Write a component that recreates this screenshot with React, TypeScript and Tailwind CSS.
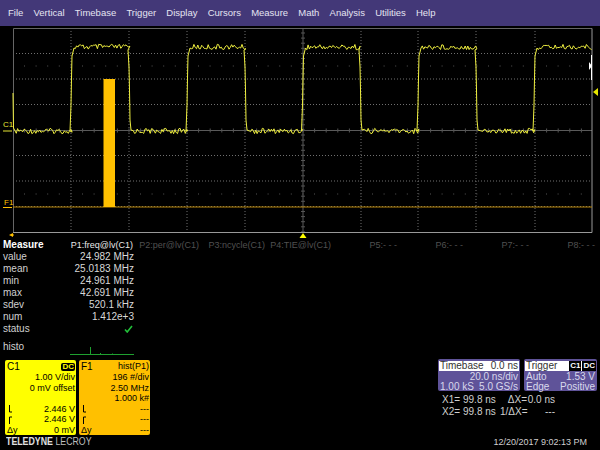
const menu = ['File', 'Vertical', 'Timebase', 'Trigger', 'Display', 'Cursors', 'Measure', 'Math', 'Analysis', 'Utilities', 'Help'];

const rows = [
  ['value', '24.982 MHz'],
  ['mean', '25.0183 MHz'],
  ['min', '24.961 MHz'],
  ['max', '42.691 MHz'],
  ['sdev', '520.1 kHz'],
  ['num', '1.412e+3'],
];

const params = ['P2:per@lv(C1)', 'P3:ncycle(C1)', 'P4:TIE@lv(C1)', 'P5:- - -', 'P6:- - -', 'P7:- - -', 'P8:- - -'];

// deterministic noise so the trace looks the same every render
function noise(i: number) {
  const v = Math.sin(i * 12.9898) * 43758.5453;
  return v - Math.floor(v);
}

function buildTrace() {
  const edges = [71, 129, 187, 245, 302.5, 360, 418, 476, 534];
  let d = 'M13 93 L13.5 128';
  let x = 15;
  let level = 131;
  let e = 0;
  let i = 0;
  while (x < 591) {
    if (e < edges.length && x >= edges[e]) {
      const rising = e % 2 === 0;
      const ex = edges[e];
      if (rising) {
        d += ` L${ex - 1} 131 L${ex} 105 L${ex + 0.5} 78 L${ex + 1} 56 L${ex + 3} 48`;
        level = 47;
        x = ex + 3;
      } else {
        d += ` L${ex - 1} 50 L${ex} 67 L${ex + 0.5} 90 L${ex + 1} 120 L${ex + 2} 130`;
        level = 131;
        x = ex + 3;
      }
      e++;
      continue;
    }
    x += 1.3;
    i++;
    d += ` L${x.toFixed(1)} ${(level + (noise(i) - 0.5) * 5.5).toFixed(1)}`;
  }
  return d;
}

const gridX = [71, 129, 187, 245, 361, 418, 476, 535];
const gridY = [53.5, 79, 104.5, 155.5, 181, 206.5];

function Scope() {
  const ticksX = [];
  for (let x = 13 + 11.6; x < 592; x += 11.6) ticksX.push(x);
  const ticksY = [];
  for (let y = 33; y < 232; y += 5.1) ticksY.push(y);
  return (
    <svg width={600} height={216} viewBox="0 26 600 216" className="block">
      {/* graticule */}
      {gridX.map((x) => (
        <line key={x} x1={x} y1={28} x2={x} y2={232} stroke="#707070" strokeWidth={1} strokeDasharray="1 2" />
      ))}
      {gridY.map((y) => (
        <line key={y} x1={13} y1={y} x2={592} y2={y} stroke="#707070" strokeWidth={1} strokeDasharray="1 2" />
      ))}
      {[66, 194].map((y) => (
        <line key={y} x1={24} y1={y} x2={592} y2={y} stroke="#555" strokeWidth={1} strokeDasharray="1 10.6" />
      ))}
      <line x1={13} y1={130.5} x2={592} y2={130.5} stroke="#5a5a5a" />
      <line x1={303} y1={28} x2={303} y2={232} stroke="#5a5a5a" />
      {ticksX.map((x) => (
        <line key={x} x1={x} y1={128.5} x2={x} y2={132.5} stroke="#555" />
      ))}
      {ticksY.map((y) => (
        <line key={y} x1={301} y1={y} x2={305} y2={y} stroke="#555" />
      ))}
      <path d="M13.5 232V28.5H592" fill="none" stroke="#666" />
      <path d="M13 232.5H592V28.5" fill="none" stroke="#999" />
      {/* histogram trace */}
      <line x1={13} y1={207} x2={592} y2={207} stroke="#b8860b" strokeWidth={1.2} />
      <rect x={103.5} y={79} width={11.5} height={128} fill="#ffc000" />
      <path d={buildTrace()} fill="none" stroke="#f0f040" strokeWidth={1} />
      {/* markers */}
      <path d="M3 131h9" stroke="#e6e635" />
      <path d="M3 207.5h9" stroke="#ffc000" />
      <path d="M591.5 55V80" stroke="#fff" />
      <path d="M589 62l3 4-3 4z" fill="#fff" />
      <path d="M593 92l5-4v8z" fill="#e6e600" />
      <path d="M303 233l3.5 5h-7z" fill="#ffff00" />
      <path d="M9 235l4-2v1.5h1v1h-1V237z" fill="#ffc000" />
      <text x={3} y={127} fontSize={8} fill="#e6e635" fontFamily="Liberation Sans">C1</text>
      <text x={4} y={205} fontSize={8} fill="#ffc000" fontFamily="Liberation Sans">F1</text>
    </svg>
  );
}

function Row({ label, value }: { label: string; value: string }) {
  return (
    <div className="flex h-[12px] items-center justify-between">
      <span className="text-[#d0d0d0]">{label}</span>
      <span className="text-[#d8d8d8]">{value}</span>
    </div>
  );
}

function FallMark() {
  return (
    <svg width={5} height={8} viewBox="0 0 5 8" className="block ml-[1px]">
      <path d="M1.5 0V7H4" fill="none" stroke="#000" />
    </svg>
  );
}

function RiseMark() {
  return (
    <svg width={5} height={8} viewBox="0 0 5 8" className="block ml-[1px]">
      <path d="M1.5 8V1H4" fill="none" stroke="#000" />
    </svg>
  );
}

function CardRow({ left, right }: { left: React.ReactNode; right: string }) {
  return (
    <div className="flex h-[10.6px] items-center justify-between whitespace-nowrap">
      {left}
      <span>{right}</span>
    </div>
  );
}

export default function App() {
  return (
    <div className="w-[600px] h-[450px] bg-black overflow-hidden flex flex-col text-[10px] leading-none font-['Liberation_Sans',Arial,sans-serif]">
      {/* Menu */}
      <div className="h-[26px] bg-[#433878] flex items-center pl-[8px] gap-[10.2px] text-[9.5px] text-[#e4e4f2]">
        {menu.map((m) => (
          <span key={m}>{m}</span>
        ))}
      </div>

      <Scope />

      {/* Measure table */}
      <div className="flex h-[12px] items-center -mt-[3px] pl-[3px] whitespace-nowrap">
        <span className="w-[64px] font-bold text-white">Measure</span>
        <span className="w-[66px] text-right text-[9px] text-[#e8e8e8]">P1:freq@lv(C1)</span>
        {params.map((p) => (
          <span key={p} className="w-[66px] text-right text-[9px] text-[#505050]">{p}</span>
        ))}
      </div>
      <div className="w-[134px] pl-[3px]">
        {rows.map((r) => (
          <Row key={r[0]} label={r[0]} value={r[1]} />
        ))}
        <div className="flex h-[12px] items-center justify-between">
          <span className="text-[#d0d0d0]">status</span>
          <svg width={9} height={8} viewBox="0 0 9 8" className="mr-[1px]">
            <path d="M1 4.5L3.2 7L8 1" fill="none" stroke="#22c03a" strokeWidth={1.6} />
          </svg>
        </div>
        <div className="flex h-[12px] items-center mt-[6px] text-[#d0d0d0]">histo</div>
      </div>
      <svg width={134} height={8} viewBox="0 0 134 8" className="block -mt-[6px]">
        <path d="M70 7.5H134M90.5 7.5V0M100.5 7.5V6M112.5 7.5V6.5" stroke="#1fa030" fill="none" />
      </svg>

      {/* Bottom area */}
      <div className="flex mt-[5px]">
        <div className="flex flex-col pl-[5px] w-[437px]">
          <div className="flex gap-[3px] text-[9px]">
            <div className="w-[71px] h-[75px] bg-[#ffff00] rounded-[2px] pl-[2px] pr-[1px] py-[1px] text-black overflow-hidden">
              <div className="flex h-[11px] items-center justify-between">
                <span className="text-[10px]">C1</span>
                <span className="bg-black text-[#ffff00] rounded-[2px] text-[8px] px-[1px] font-bold">DC</span>
              </div>
              <div className="text-right leading-[10.6px] whitespace-nowrap">1.00 V/div</div>
              <div className="text-right leading-[10.6px] whitespace-nowrap">0 mV offset</div>
              <div className="h-[10.6px]"></div>
              <CardRow left={<FallMark />} right="2.446 V" />
              <CardRow left={<RiseMark />} right="2.446 V" />
              <CardRow left={<span>Δy</span>} right="0 mV" />
            </div>
            <div className="w-[71px] h-[75px] bg-[#ffc000] rounded-[2px] pl-[2px] pr-[1px] py-[1px] text-black overflow-hidden">
              <div className="flex h-[11px] items-center justify-between">
                <span className="text-[10px]">F1</span>
                <span>hist(P1)</span>
              </div>
              <div className="text-right leading-[10.6px] whitespace-nowrap">196 #/div</div>
              <div className="text-right leading-[10.6px] whitespace-nowrap">2.50 MHz</div>
              <div className="text-right leading-[10.6px] whitespace-nowrap">1.000 k#</div>
              <CardRow left={<FallMark />} right="---" />
              <CardRow left={<RiseMark />} right="---" />
              <CardRow left={<span>Δy</span>} right="---" />
            </div>
          </div>
          <div className="mt-[1px] ml-[1px] text-[11px] text-[#e0e0e0] whitespace-nowrap origin-left scale-x-[0.8]">
            <span className="font-bold">TELEDYNE</span> <span className="text-[#bdbdbd]">LECROY</span>
          </div>
        </div>

        <div className="flex flex-col w-[160px] -mt-[1px]">
          <div className="flex gap-[4px] ml-[1px]">
            <div className="w-[82px] h-[32px] bg-[#5f5399] rounded-[2px] text-[#d8d8ec] px-[1px] pt-[2px]">
              <div className="flex h-[10px] items-center justify-between bg-white text-[#333] px-[1px]">
                <span>Timebase</span>
                <span>0.0 ns</span>
              </div>
              <div className="h-[10px] flex items-center justify-end pr-[1px] mt-[1px]">20.0 ns/div</div>
              <div className="h-[10px] flex items-center justify-between px-[1px]">
                <span>1.00 kS</span>
                <span>5.0 GS/s</span>
              </div>
            </div>
            <div className="w-[73px] h-[32px] bg-[#5f5399] rounded-[2px] text-[#d8d8ec] px-[1px] pt-[2px]">
              <div className="flex h-[10px] items-center justify-between bg-white text-[#333] pl-[1px]">
                <span>Trigger</span>
                <span className="flex gap-[1px] text-[8px] font-bold text-white">
                  <span className="bg-black px-[1px] py-[1px]">C1</span>
                  <span className="bg-black px-[1px] py-[1px]">DC</span>
                </span>
              </div>
              <div className="h-[10px] flex items-center justify-between px-[1px] mt-[1px]">
                <span>Auto</span>
                <span>1.53 V</span>
              </div>
              <div className="h-[10px] flex items-center justify-between px-[1px]">
                <span>Edge</span>
                <span>Positive</span>
              </div>
            </div>
          </div>
          <div className="text-[#cfcfcf] pl-[5px] mt-[3px] flex h-[11px] items-center whitespace-nowrap">
            <span className="w-[21px]">X1=</span>
            <span className="w-[37px]">99.8 ns</span>
            <span className="w-[27px] text-right">ΔX=</span>
            <span className="w-[28px] text-right">0.0 ns</span>
          </div>
          <div className="text-[#cfcfcf] pl-[5px] mt-[1px] flex h-[11px] items-center whitespace-nowrap">
            <span className="w-[21px]">X2=</span>
            <span className="w-[37px]">99.8 ns</span>
            <span className="w-[27px] text-right">1/ΔX=</span>
            <span className="w-[28px] text-right">---</span>
          </div>
          <div className="text-[#cfcfcf] text-[9px] text-right pr-[10px] mt-[21px]">12/20/2017 9:02:13 PM</div>
        </div>
      </div>
    </div>
  );
}
